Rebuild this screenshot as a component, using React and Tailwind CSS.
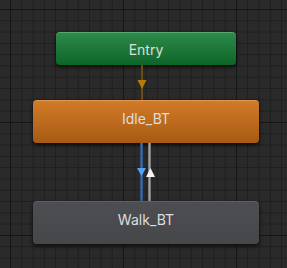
import React from "react";

const StateNode = ({ label, className }) => (
  <div
    className={`flex items-center justify-center rounded-[4px] text-[14px] text-[#dedede] shadow-[0_2px_4px_rgba(0,0,0,0.7)] ${className}`}
  >
    {label}
  </div>
);

export default function App() {
  return (
    <div className="w-[287px] h-[268px] overflow-hidden bg-[#2a2a2a] bg-[linear-gradient(to_bottom,#161616_1px,transparent_1px),linear-gradient(to_right,#161616_1px,transparent_1px),linear-gradient(to_bottom,#1f1f1f_1px,transparent_1px),linear-gradient(to_right,#1f1f1f_1px,transparent_1px)] bg-[size:113px_113px,113px_113px,11.3px_11.3px,11.3px_11.3px] bg-[position:10px_9px] flex flex-col items-center pl-[5px] pt-[32px] font-['Inter','Noto_Sans',sans-serif]">
      {/* Entry */}
      <StateNode
        label="Entry"
        className="w-[180px] h-[33px] bg-linear-to-b from-[#2c8a4a] to-[#0c6627] border-t border-[#56a770]"
      />

      {/* entry -> idle */}
      <svg width="20" height="35" className="block shrink-0">
        <line x1="6" y1="0" x2="6" y2="35" stroke="#6c4a12" strokeWidth="2" />
        <polygon points="1.5,15 10.5,15 6,24" fill="#b47a0c" />
      </svg>

      {/* Idle */}
      <StateNode
        label="Idle_BT"
        className="w-[226px] h-[43px] pb-[8px] bg-linear-to-b from-[#d27b28] to-[#a75a13] border-t border-[#e0964e]"
      />

      {/* idle <-> walk */}
      <svg width="20" height="58" className="block shrink-0">
        <line x1="5.5" y1="0" x2="5.5" y2="58" stroke="#2f5485" strokeWidth="3" />
        <line x1="5.5" y1="0" x2="5.5" y2="58" stroke="#4569a0" strokeWidth="1" />
        <line x1="13.5" y1="0" x2="13.5" y2="58" stroke="#7a7a7a" strokeWidth="3" />
        <line x1="13.5" y1="0" x2="13.5" y2="58" stroke="#a6a6a6" strokeWidth="1" />
        <polygon points="1,25 10,25 5.5,33" fill="#57a0f5" />
        <polygon points="10,34 19,34 14.5,25" fill="#f4f4f4" />
      </svg>

      {/* Walk */}
      <StateNode
        label="Walk_BT"
        className="w-[226px] h-[43px] pb-[8px] bg-linear-to-b from-[#4c4e52] to-[#45474b] border-t border-[#5e6064]"
      />
    </div>
  );
}
